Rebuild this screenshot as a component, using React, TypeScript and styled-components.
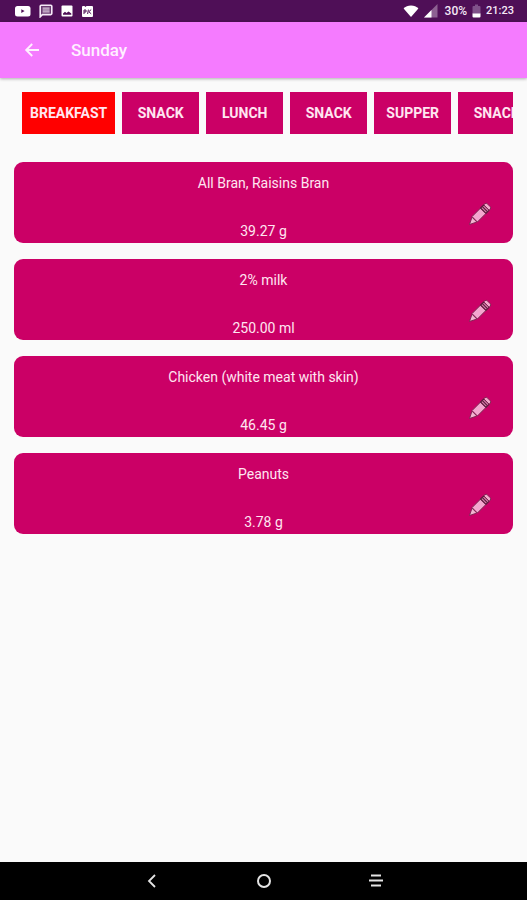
import React, { useState } from "react";
import styled, { createGlobalStyle } from "styled-components";

const GlobalStyle = createGlobalStyle`
  *, *::before, *::after { box-sizing: border-box; }
  body {
    margin: 0;
    background: #fafafa;
    font-family: Roboto, "Liberation Sans", sans-serif;
  }
  button { font: inherit; border: 0; padding: 0; cursor: pointer; }
  svg { display: block; }
`;

const Screen = styled.div`
  display: flex;
  flex-direction: column;
  min-height: 100vh;
`;

const StatusBar = styled.div`
  display: flex;
  align-items: center;
  justify-content: space-between;
  height: 22px;
  padding: 0 13px 0 15px;
  background: #4f0f57;
  color: #f6e9f7;
  font-size: 12px;
  line-height: 16px;
  font-weight: 500;
`;

const StatusGroup = styled.div<{ $gap: number }>`
  display: flex;
  align-items: center;
  gap: ${({ $gap }) => $gap}px;
`;

const BatteryLevel = styled.span`
  padding-left: 2px;
`;

const Clock = styled.time`
  font-size: 11px;
`;

const AppBar = styled.header`
  display: flex;
  align-items: center;
  gap: 29px;
  height: 56px;
  padding: 0 22px;
  background: #f57bff;
  color: #fff0ff;
  box-shadow: 0 1px 3px rgba(0, 0, 0, 0.3);
`;

const BackButton = styled.button`
  display: grid;
  place-items: center;
  width: 20px;
  height: 20px;
  background: none;
  color: inherit;
`;

const Title = styled.h1`
  margin: 0;
  font-size: 17px;
  line-height: 24px;
  font-weight: 500;
`;

const Content = styled.main`
  flex: 1;
  padding: 14px;
`;

const MealTabs = styled.nav`
  display: flex;
  gap: 7px;
  padding-left: 8px;
  overflow-x: auto;
  scrollbar-width: none;
`;

const MealTab = styled.button<{ $active: boolean }>`
  flex: none;
  min-width: 77px;
  height: 42px;
  padding: 0 8px;
  background: ${({ $active }) => ($active ? "#ff0000" : "#cb0066")};
  color: #ffe6f1;
  font-size: 14px;
  line-height: 20px;
  font-weight: 700;
`;

const FoodList = styled.ul`
  display: flex;
  flex-direction: column;
  gap: 16px;
  margin: 28px 0 0;
  padding: 0;
  list-style: none;
`;

const FoodCard = styled.li`
  display: grid;
  grid-template-columns: 48px 1fr 48px;
  min-height: 81px;
  padding: 11px 9px 2px;
  border-radius: 9px;
  background: #cb0066;
  color: #ffe6f1;
`;

const FoodText = styled.div`
  grid-column: 2;
  display: flex;
  flex-direction: column;
  justify-content: space-between;
  text-align: center;
  font-size: 14px;
  line-height: 20px;
`;

const FoodName = styled.span``;
const FoodAmount = styled.span``;

const EditButton = styled.button`
  display: grid;
  place-items: center;
  align-self: end;
  justify-self: center;
  width: 32px;
  height: 32px;
  margin-bottom: 11px;
  background: none;
`;

const NavBar = styled.nav`
  display: flex;
  align-items: center;
  justify-content: center;
  gap: 80px;
  height: 38px;
  background: #000;
  color: #e4e4e4;
`;

const NavButton = styled.button`
  display: grid;
  place-items: center;
  width: 32px;
  height: 32px;
  background: none;
  color: inherit;
`;

const VideoIcon = () => (
  <svg width="16" height="12" viewBox="0 0 16 12" aria-hidden="true">
    <rect x="0" y="1" width="15.5" height="10.5" rx="2.5" fill="#fff" />
    <path d="M6.300 4.200v3.800L9.600 6.100z" fill="#4f0f57" />
  </svg>
);

const MessageIcon = () => (
  <svg width="14" height="14" viewBox="0 0 14 14" aria-hidden="true">
    <path d="M1.2 12.8V2.2q0-1 1-1h9.6q1 0 1 1v7.4q0 1-1 1H3.4z" fill="#6b3a72" stroke="#f6e9f7" strokeWidth="1.6" />
    <path d="M3.6 4.1h7M3.6 6h7M3.6 7.9h7" stroke="#f6e9f7" strokeWidth="1" />
  </svg>
);

const ImageIcon = () => (
  <svg width="12" height="12" viewBox="0 0 12 12" aria-hidden="true">
    <rect x="0.5" y="0.5" width="11" height="11" rx="1" fill="#fff" />
    <path d="M2 9.8V8.400l2-1.600 1.500 1.200 2-1.600 2.800 2v1.400z" fill="#4f0f57" />
  </svg>
);

const NoteIcon = () => (
  <svg width="13" height="13" viewBox="0 0 13 13" aria-hidden="true">
    <path d="M1.5 1h2l1 1 1-1h5.5q1 0 1 1v9q0 1-1 1h-9q-1 0-1-1V2z" fill="#fff" />
    <path d="M3 9V5h2v2H3M10.2 4.6L7.8 6.7l2.4 2.1M7.4 4.6L6.6 9" fill="none" stroke="#4f0f57" strokeWidth="1" />
  </svg>
);

const WifiIcon = () => (
  <svg width="16" height="12" viewBox="0 0 16 12" aria-hidden="true">
    <path d="M8 12L.6 3.6C2.4 1.7 5 .5 8 .5s5.600 1.200 7.400 3.100z" fill="#fff" />
  </svg>
);

const SignalIcon = () => (
  <svg width="14" height="14" viewBox="0 0 14 14" aria-hidden="true">
    <path d="M0 13.500L13.500 0v13.500z" fill="#8d6192" />
    <path d="M0 13.500L7.500 6v7.500z" fill="#fff" />
  </svg>
);

const BatteryIcon = () => (
  <svg width="9" height="14" viewBox="0 0 9 14" aria-hidden="true">
    <path d="M0.500 3Q.5 2 1.500 2H3V.5h3V2h1.500q1 0 1 1v7h-8z" fill="#80518a" />
    <path d="M.5 9.500h8v3q0 1-1 1h-6q-1 0-1-1z" fill="#fff" />
  </svg>
);

const ArrowIcon = () => (
  <svg width="16" height="16" viewBox="0 0 16 16" fill="none" stroke="currentColor" strokeWidth="1.900" aria-hidden="true">
    <path d="M15 8H2.500M8.200 2L2.200 8l6 6" />
  </svg>
);

const PencilIcon = () => (
  <svg width="24" height="24" viewBox="0 0 24 24" strokeLinejoin="round" aria-hidden="true">
    <path d="M1.500 22.500L4 15.200 8.800 20z" fill="#f3b6d2" stroke="#7c2350" strokeWidth="0.900" />
    <path d="M4 14.600L12.600 6l5.400 5.400L9.400 20z" fill="#f4a6cf" stroke="#7c2350" strokeWidth="1" />
    <path d="M12.600 6l3.200-3.200 5.400 5.400-3.200 3.200z" fill="#dc7fae" stroke="#5b1a3c" strokeWidth="1.100" />
    <path d="M14.200 4.400l5.400 5.400" stroke="#5b1a3c" strokeWidth="1.200" />
    <path d="M15.800 2.800l1.200-1.100q1.300-.9 2.300.1l2.900 2.900q1 1 .1 2.300l-1.100 1.200z" fill="#f3a9cb" stroke="#7c2350" strokeWidth="0.900" />
  </svg>
);

const NavBackIcon = () => (
  <svg width="16" height="16" viewBox="0 0 16 16" fill="none" stroke="currentColor" strokeWidth="1.800" aria-hidden="true">
    <path d="M11 2L5 8l6 6" />
  </svg>
);

const NavHomeIcon = () => (
  <svg width="16" height="16" viewBox="0 0 16 16" fill="none" stroke="currentColor" strokeWidth="2" aria-hidden="true">
    <circle cx="8" cy="8" r="6" />
  </svg>
);

const NavMenuIcon = () => (
  <svg width="16" height="16" viewBox="0 0 16 16" fill="none" stroke="currentColor" strokeWidth="1.800" aria-hidden="true">
    <path d="M3 2.500h10M1 7.500h14M3 12.500h10" />
  </svg>
);

const meals = ["BREAKFAST", "SNACK", "LUNCH", "SNACK", "SUPPER", "SNACK"];

const foods = [
  { name: "All Bran, Raisins Bran", amount: "39.27 g" },
  { name: "2% milk", amount: "250.00 ml" },
  { name: "Chicken (white meat with skin)", amount: "46.45 g" },
  { name: "Peanuts", amount: "3.78 g" },
];

export default function App() {
  const [active, setActive] = useState(0);

  return (
    <>
      <GlobalStyle />
      <Screen>
        <StatusBar>
          <StatusGroup $gap={8}>
            <VideoIcon />
            <MessageIcon />
            <ImageIcon />
            <NoteIcon />
          </StatusGroup>
          <StatusGroup $gap={5}>
            <WifiIcon />
            <SignalIcon />
            <BatteryLevel>30%</BatteryLevel>
            <BatteryIcon />
            <Clock>21:23</Clock>
          </StatusGroup>
        </StatusBar>
        <AppBar>
          <BackButton type="button" aria-label="Back">
            <ArrowIcon />
          </BackButton>
          <Title>Sunday</Title>
        </AppBar>
        <Content>
          <MealTabs aria-label="Meals">
            {meals.map((meal, i) => (
              <MealTab
                key={i}
                type="button"
                $active={i === active}
                aria-pressed={i === active}
                onClick={() => setActive(i)}
              >
                {meal}
              </MealTab>
            ))}
          </MealTabs>
          <FoodList>
            {foods.map((food) => (
              <FoodCard key={food.name}>
                <FoodText>
                  <FoodName>{food.name}</FoodName>
                  <FoodAmount>{food.amount}</FoodAmount>
                </FoodText>
                <EditButton type="button" aria-label={`Edit ${food.name}`}>
                  <PencilIcon />
                </EditButton>
              </FoodCard>
            ))}
          </FoodList>
        </Content>
        <NavBar aria-label="System">
          <NavButton type="button" aria-label="Back">
            <NavBackIcon />
          </NavButton>
          <NavButton type="button" aria-label="Home">
            <NavHomeIcon />
          </NavButton>
          <NavButton type="button" aria-label="Recent apps">
            <NavMenuIcon />
          </NavButton>
        </NavBar>
      </Screen>
    </>
  );
}
